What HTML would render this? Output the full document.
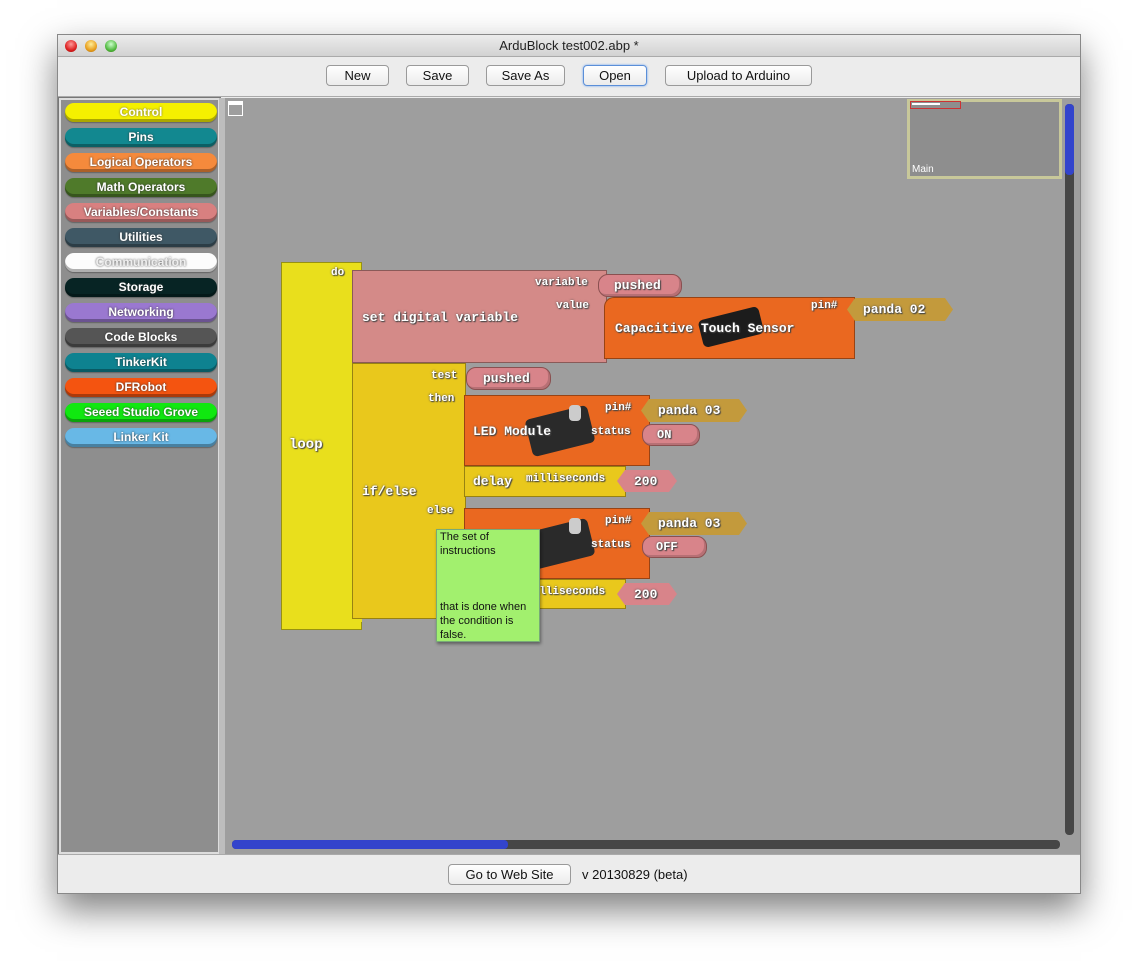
<!DOCTYPE html>
<html><head><meta charset="utf-8"><style>
*{margin:0;padding:0;box-sizing:border-box}
body{width:1138px;height:974px;background:#fff;position:relative;overflow:hidden;font-family:"Liberation Sans",sans-serif}
.a{position:absolute}
.win{left:57px;top:34px;width:1024px;height:860px;background:#ececec;box-shadow:0 16px 34px rgba(0,0,0,.5);border:1px solid #888}
.btn{position:absolute;top:65px;height:21px;border:1px solid #9a9a9a;border-radius:4px;background:linear-gradient(#fff,#ececec);font-size:13px;text-align:center;line-height:19px;color:#111}
.pal{position:absolute;left:65px;width:152px;height:19px;border-radius:9px;font-size:12px;font-weight:bold;color:#fff;text-align:center;line-height:18px;text-shadow:0 0 2px #333;box-shadow:inset 0 -3px 0 rgba(0,0,0,.3),0 1px 1px rgba(0,0,0,.3)}
.bt{position:absolute;font-family:"Liberation Mono",monospace;font-weight:bold;color:#fff;text-shadow:1px 1px 1px #444,0 0 2px #555;white-space:nowrap}
.blk{position:absolute;border:1px solid rgba(0,0,0,.35)}
.pill{position:absolute;border-radius:10px;background:#d8848a;border:1px solid #8a5050;box-shadow:inset -2px -2px 0 rgba(0,0,0,.15)}
.hex{position:absolute;background:#c39a3c;clip-path:polygon(8px 0,calc(100% - 8px) 0,100% 50%,calc(100% - 8px) 100%,8px 100%,0 50%)}
.img{position:absolute;background:#1c1c1c;border-radius:5px;transform:rotate(-14deg)}
.tip{position:absolute;left:440px;font-size:11px;line-height:14px;color:#111;font-family:"Liberation Sans",sans-serif}
</style></head><body>
<div class="a win"></div>
<div class="a" style="left:58px;top:35px;width:1022px;height:22px;background:linear-gradient(#ececec,#d2d2d2);border-bottom:1px solid #aaa"></div>
<div class="a" style="left:65px;top:40px;width:12px;height:12px;border-radius:6px;background:radial-gradient(circle at 50% 35%,#f99,#d22 60%,#900)"></div>
<div class="a" style="left:85px;top:40px;width:12px;height:12px;border-radius:6px;background:radial-gradient(circle at 50% 35%,#fe9,#e9a020 60%,#a60)"></div>
<div class="a" style="left:105px;top:40px;width:12px;height:12px;border-radius:6px;background:radial-gradient(circle at 50% 35%,#cfc,#5b4 60%,#270)"></div>
<div class="a" style="left:0;top:38px;width:1138px;text-align:center;font-size:13px;color:#222">ArduBlock test002.abp *</div>
<div class="btn" style="left:326px;width:63px">New</div>
<div class="btn" style="left:406px;width:63px">Save</div>
<div class="btn" style="left:486px;width:79px">Save As</div>
<div class="btn" style="left:583px;width:64px;border-color:#5b8fd8;box-shadow:0 0 2px #6aa0f0">Open</div>
<div class="btn" style="left:665px;width:147px">Upload to Arduino</div>
<div class="a" style="left:58px;top:96px;width:1022px;height:1px;background:#aaa"></div>
<div class="a" style="left:59px;top:98px;width:161px;height:756px;background:#8e8e8e;border:2px solid #ddd;outline:1px solid #777"></div>
<div class="a" style="left:219px;top:98px;width:6px;height:756px;background:#bdbdbd"></div>
<div class="pal" style="top:103px;background:#f5f000;color:#fff;text-shadow:0 0 2px #665">Control</div>
<div class="pal" style="top:128px;background:#128890">Pins</div>
<div class="pal" style="top:153px;background:#f58a3c">Logical Operators</div>
<div class="pal" style="top:178px;background:#4f7a2a">Math Operators</div>
<div class="pal" style="top:203px;background:#d88080">Variables/Constants</div>
<div class="pal" style="top:228px;background:#3f5865">Utilities</div>
<div class="pal" style="top:253px;background:#fcfcfc;color:#eee;text-shadow:0 0 2px #444">Communication</div>
<div class="pal" style="top:278px;background:#072424">Storage</div>
<div class="pal" style="top:303px;background:#9a78d0">Networking</div>
<div class="pal" style="top:328px;background:#555">Code Blocks</div>
<div class="pal" style="top:353px;background:#0e8290">TinkerKit</div>
<div class="pal" style="top:378px;background:#f45410">DFRobot</div>
<div class="pal" style="top:403px;background:#10e810">Seeed Studio Grove</div>
<div class="pal" style="top:428px;background:#68b8e6">Linker Kit</div>
<div class="a" style="left:225px;top:98px;width:855px;height:756px;background:#9e9e9e"></div>
<div class="a" style="left:228px;top:101px;width:15px;height:15px;border:1px solid #fff;border-top-width:4px"></div>
<div class="a" style="left:907px;top:99px;width:155px;height:80px;background:#8e8e8e;border:3px solid #c8c89a"></div>
<div class="a" style="left:910px;top:101px;width:51px;height:8px;border:1px solid #c33"></div>
<div class="a" style="left:912px;top:103px;width:28px;height:2px;background:#fff"></div>
<div class="a" style="left:912px;top:164px;font-size:10px;color:#fff">Main</div>
<div class="a" style="left:1065px;top:104px;width:9px;height:731px;background:#464646;border-radius:4px"></div>
<div class="a" style="left:1065px;top:104px;width:9px;height:71px;background:#3344cc;border-radius:4px"></div>
<div class="a" style="left:232px;top:840px;width:828px;height:9px;background:#464646;border-radius:4px"></div>
<div class="a" style="left:232px;top:840px;width:276px;height:9px;background:#3344cc;border-radius:4px"></div>
<div class="a" style="left:58px;top:854px;width:1022px;height:1px;background:#aaa"></div>
<div class="btn" style="left:448px;top:864px;width:123px">Go to Web Site</div>
<div class="a" style="left:582px;top:867px;font-size:13px;color:#111">v 20130829 (beta)</div>

<div class="blk" style="left:281px;top:262px;width:81px;height:368px;background:#e9df1c"></div>
<div class="blk" style="left:352px;top:270px;width:10px;height:352px;background:#e9df1c;border:none"></div>
<div class="bt" style="left:331px;top:267px;font-size:11px">do</div>
<div class="bt" style="left:289px;top:437px;font-size:14px">loop</div>

<div class="blk" style="left:352px;top:270px;width:255px;height:93px;background:#d48a88"></div>
<div class="bt" style="left:362px;top:310px;font-size:13px">set digital variable</div>
<div class="bt" style="left:535px;top:277px;font-size:11px">variable</div>
<div class="bt" style="left:556px;top:300px;font-size:11px">value</div>
<div class="pill" style="left:598px;top:274px;width:84px;height:23px"></div>
<div class="bt" style="left:614px;top:278px;font-size:13px">pushed</div>

<div class="blk" style="left:604px;top:297px;width:251px;height:62px;background:#ea6820;border-radius:10px 0 0 0"></div>
<div class="img" style="left:700px;top:313px;width:62px;height:28px"></div>
<div class="bt" style="left:615px;top:321px;font-size:13px">Capacitive Touch Sensor</div>
<div class="bt" style="left:811px;top:300px;font-size:11px">pin#</div>
<div class="hex" style="left:847px;top:298px;width:106px;height:23px"></div>
<div class="bt" style="left:863px;top:302px;font-size:13px">panda 02</div>

<div class="blk" style="left:352px;top:363px;width:114px;height:256px;background:#e9c81c"></div>
<div class="bt" style="left:362px;top:484px;font-size:13px">if/else</div>
<div class="bt" style="left:431px;top:370px;font-size:11px">test</div>
<div class="bt" style="left:428px;top:393px;font-size:11px">then</div>
<div class="bt" style="left:427px;top:505px;font-size:11px">else</div>
<div class="pill" style="left:466px;top:367px;width:85px;height:23px"></div>
<div class="bt" style="left:483px;top:371px;font-size:13px">pushed</div>

<div class="blk" style="left:464px;top:395px;width:186px;height:71px;background:#ea6820"></div>
<div class="img" style="left:528px;top:412px;width:64px;height:38px;background:#2a2a2a"></div>
<div class="a" style="left:569px;top:405px;width:12px;height:16px;background:#ccc;border-radius:4px"></div>
<div class="bt" style="left:473px;top:424px;font-size:13px">LED Module</div>
<div class="bt" style="left:605px;top:402px;font-size:11px">pin#</div>
<div class="bt" style="left:591px;top:426px;font-size:11px">status</div>
<div class="hex" style="left:641px;top:399px;width:106px;height:23px"></div>
<div class="bt" style="left:658px;top:403px;font-size:13px">panda 03</div>
<div class="pill" style="left:642px;top:424px;width:58px;height:22px"></div>
<div class="bt" style="left:657px;top:428px;font-size:12px">ON</div>

<div class="blk" style="left:464px;top:466px;width:162px;height:31px;background:#e9c81c"></div>
<div class="bt" style="left:473px;top:474px;font-size:13px">delay</div>
<div class="bt" style="left:526px;top:473px;font-size:11px">milliseconds</div>
<div class="hex" style="left:617px;top:470px;width:60px;height:22px;background:#d8848a"></div>
<div class="bt" style="left:634px;top:474px;font-size:13px">200</div>

<div class="blk" style="left:464px;top:508px;width:186px;height:71px;background:#ea6820"></div>
<div class="img" style="left:528px;top:525px;width:64px;height:38px;background:#2a2a2a"></div>
<div class="a" style="left:569px;top:518px;width:12px;height:16px;background:#ccc;border-radius:4px"></div>
<div class="bt" style="left:605px;top:515px;font-size:11px">pin#</div>
<div class="bt" style="left:591px;top:539px;font-size:11px">status</div>
<div class="hex" style="left:641px;top:512px;width:106px;height:23px"></div>
<div class="bt" style="left:658px;top:516px;font-size:13px">panda 03</div>
<div class="pill" style="left:642px;top:536px;width:65px;height:22px"></div>
<div class="bt" style="left:656px;top:540px;font-size:12px">OFF</div>

<div class="blk" style="left:464px;top:579px;width:162px;height:30px;background:#e9c81c"></div>
<div class="bt" style="left:526px;top:586px;font-size:11px">milliseconds</div>
<div class="hex" style="left:617px;top:583px;width:60px;height:22px;background:#d8848a"></div>
<div class="bt" style="left:634px;top:587px;font-size:13px">200</div>

<div class="a" style="left:436px;top:529px;width:104px;height:113px;background:#a2f06e;border:1px solid #7a7;box-shadow:1px 2px 3px rgba(0,0,0,.4)"></div>
<div class="tip" style="top:530px">The set of<br>instructions</div>
<div class="tip" style="top:600px">that is done when<br>the condition is<br>false.</div>
</body></html>
